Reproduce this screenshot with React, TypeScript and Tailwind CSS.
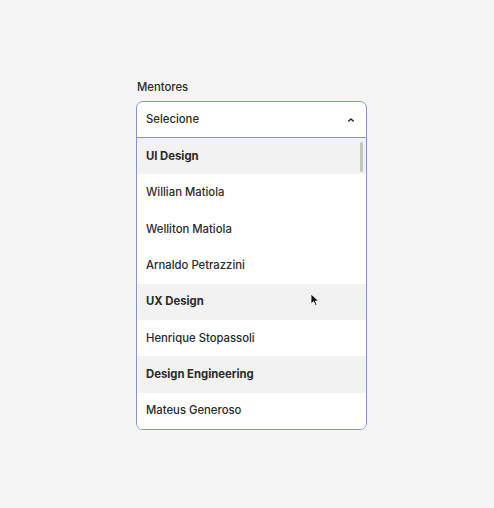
import React from "react";

const items: { label: string; group?: boolean }[] = [
  { label: "UI Design", group: true },
  { label: "Willian Matiola" },
  { label: "Welliton Matiola" },
  { label: "Arnaldo Petrazzini" },
  { label: "UX Design", group: true },
  { label: "Henrique Stopassoli" },
  { label: "Design Engineering", group: true },
  { label: "Mateus Generoso" },
];

export default function App() {
  return (
    <div
      className="relative w-[494px] h-[508px] bg-[#f5f5f5] pt-[80px] pl-[136px]"
      style={{ fontFamily: "Inter, 'Noto Sans', sans-serif" }}
    >
      <div className="text-[11.3px] leading-[14px] font-medium text-[#2a2a2a] pl-[1px]">Mentores</div>
      <div className="mt-[7px] w-[231px] rounded-[7px] border border-[#8294dc] bg-white overflow-hidden relative">
        <div className="h-[36px] flex items-center justify-between pl-[9px] pr-[10px] border-b border-[#8294dc]">
          <span className="text-[11.3px] font-medium text-[#2a2a2a]">Selecione</span>
          <svg width="10" height="10" viewBox="0 0 10 10">
            <path d="M2.7 6.1 L5 3.9 L7.3 6.1" fill="none" stroke="#222" strokeWidth="1.4" strokeLinecap="round" strokeLinejoin="round" />
          </svg>
        </div>
        <div className="flex flex-col">
          {items.map((it, i) => (
            <div
              key={i}
              className={
                "h-[36.4px] flex items-center pl-[9px] text-[11.3px] text-[#2a2a2a] " +
                (it.group ? "bg-[#f2f2f2] font-bold" : "bg-white font-medium")
              }
            >
              {it.label}
            </div>
          ))}
        </div>
        <div className="absolute right-[3px] top-[40px] w-[3px] h-[30px] rounded-full bg-[#c4c4c4]" />
      </div>
      <svg className="absolute left-[310px] top-[293px]" width="10" height="14" viewBox="0 0 10 14">
        <path d="M1 1 L1 11 L3.6 8.6 L5.4 12.6 L7 11.9 L5.3 8 L8.6 8 Z" fill="#111" stroke="#fff" strokeWidth="0.8" strokeLinejoin="round" />
      </svg>
    </div>
  );
}
